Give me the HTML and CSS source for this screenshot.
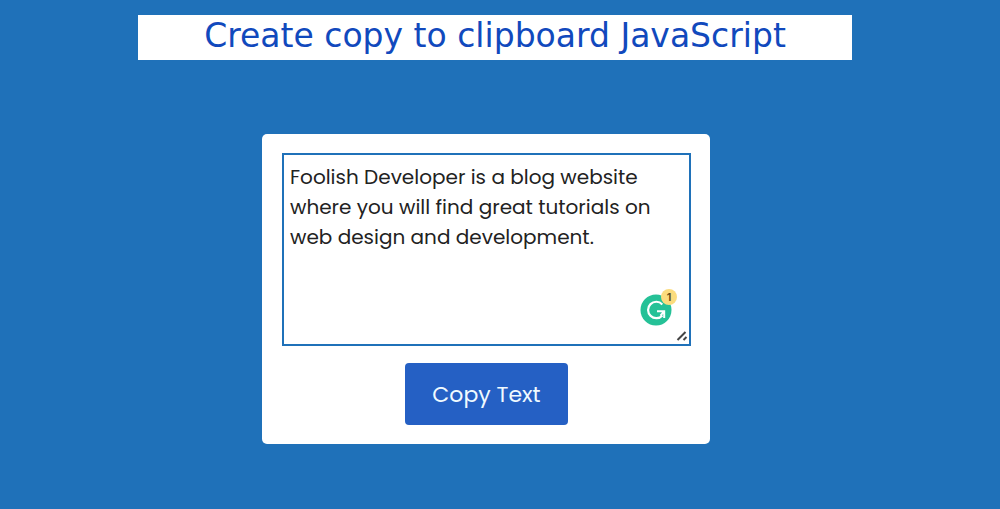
FILE: index.html
```html
<!DOCTYPE html>
<html lang="en">
<head>
  <meta charset="utf-8">
  <meta name="viewport" content="width=device-width, initial-scale=1">
  <title>Create copy to clipboard JavaScript</title>
  <link rel="stylesheet" href="styles.css">
</head>
<body>
  <header class="banner">
    <h1 class="banner-title">Create copy to clipboard JavaScript</h1>
  </header>
  <main class="stage">
    <section class="card">
      <div class="editor">
        <textarea class="editor-text" aria-label="Text to copy" spellcheck="false">Foolish Developer is a blog website where you will find great tutorials on web design and development.</textarea>
        <svg class="checker" viewBox="0 0 38 38" role="img" aria-label="1 writing suggestion">
          <circle cx="16" cy="22" r="15.5" fill="#25c197"/>
          <path d="M22.3 16.4A8.2 8.2 0 1 0 22.4 27.4" fill="none" stroke="#fff" stroke-width="2.2"/>
          <path d="M17 23.2H24.2V30M24.2 23.2L20.5 27.6" fill="none" stroke="#fff" stroke-width="2"/>
          <circle cx="29" cy="9" r="8" fill="#fbdc7e"/>
          <text class="checker-count" x="29" y="13" text-anchor="middle">1</text>
        </svg>
        <svg class="grip" viewBox="0 0 12 12" aria-hidden="true">
          <path d="M1.5 10L9.5 2M7.5 10L10.5 7" fill="none" stroke="#444" stroke-width="2"/>
        </svg>
      </div>
      <button class="copy" type="button">Copy Text</button>
    </section>
  </main>
</body>
</html>
```
FILE: styles.css
```css
* {
  box-sizing: border-box;
}

body {
  margin: 0;
  min-height: 100vh;
  padding: 15px 0 0;
  background: #1f71b9;
  font-family: Poppins, Inter, sans-serif;
}

.banner {
  margin: 0 148px 0 138px;
  background: #fff;
  text-align: center;
}

.banner-title {
  margin: 0;
  padding-bottom: 4px;
  color: #1149bd;
  font: 400 33px/41px Verdana, "DejaVu Sans", sans-serif;
}

.stage {
  display: flex;
  justify-content: center;
  padding: 74px 28px 40px 0;
}

.card {
  display: flex;
  flex-direction: column;
  align-items: center;
  gap: 17px;
  width: 448px;
  max-width: 100%;
  padding: 19px 19px 19px 20px;
  border-radius: 5px;
  background: #fff;
}

.editor {
  position: relative;
  width: 100%;
}

.editor-text {
  display: block;
  width: 100%;
  height: 193px;
  padding: 7px 6px;
  border: 2px solid #1f71b9;
  border-radius: 0;
  outline: none;
  resize: none;
  background: #fff;
  color: #222;
  font: 400 20px/30px Poppins, Inter, sans-serif;
}

.checker {
  position: absolute;
  right: 13px;
  bottom: 20px;
  width: 38px;
  height: 38px;
}

.checker-count {
  fill: #5f4a18;
  font: 600 11px Inter, sans-serif;
}

.grip {
  position: absolute;
  right: 3px;
  bottom: 4px;
  width: 12px;
  height: 12px;
}

.copy {
  padding: 17px 27px 15px;
  border: 0;
  border-radius: 4px;
  background: #2560c4;
  color: #f0faff;
  font: 400 22px/30px Poppins, Inter, sans-serif;
  cursor: pointer;
}
```
